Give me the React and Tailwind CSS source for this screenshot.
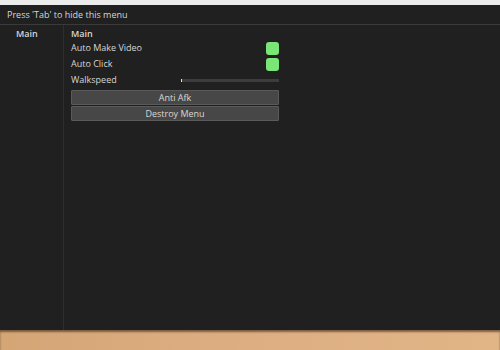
function Toggle() {
  return <div className="h-[13px] w-[13px] rounded-[3px] bg-[#79e677]" />;
}

function Row({ label, children }) {
  return (
    <div className="flex h-[16px] items-center justify-between">
      <span>{label}</span>
      {children}
    </div>
  );
}

function Button({ label }) {
  return (
    <button className="h-[15px] w-full rounded-[1px] border border-[#5a5a5a] bg-[#474747] text-center text-[9px] leading-none text-[#d8d8d8]">
      {label}
    </button>
  );
}

export default function App() {
  return (
    <div className="flex h-[350px] w-[500px] flex-col overflow-hidden bg-[#ececec] font-['Open_Sans',sans-serif] text-[9px] text-[#d6d6d6]">
      <div className="mt-[5px] flex flex-1 flex-col bg-[#202020]">
        <div className="flex h-[20px] items-center border-b border-[#3a3a3a] pl-[7px]">
          Press 'Tab' to hide this menu
        </div>
        <div className="flex flex-1">
          <div className="w-[64px] border-r border-[#2e2e2e] pl-[16px] pt-[2px] font-semibold leading-[13px]">
            Main
          </div>
          <div className="w-[215px] pl-[7px] pt-[2px]">
            <div className="font-semibold leading-[13px]">Main</div>
            <Row label="Auto Make Video">
              <Toggle />
            </Row>
            <Row label="Auto Click">
              <Toggle />
            </Row>
            <Row label="Walkspeed">
              <div className="relative h-[3px] w-[98px] bg-[#3c3c3c]">
                <div className="absolute left-0 top-0 h-[3px] w-[1px] bg-[#e0e0e0]" />
              </div>
            </Row>
            <div className="mt-[2px] flex flex-col gap-[1px]">
              <Button label="Anti Afk" />
              <Button label="Destroy Menu" />
            </div>
          </div>
        </div>
      </div>
      <div className="h-[20px] bg-gradient-to-r from-[#d4a676] via-[#dcae82] to-[#e2b587] shadow-[inset_0_2px_2px_rgba(60,40,20,0.6)]" />
    </div>
  );
}
